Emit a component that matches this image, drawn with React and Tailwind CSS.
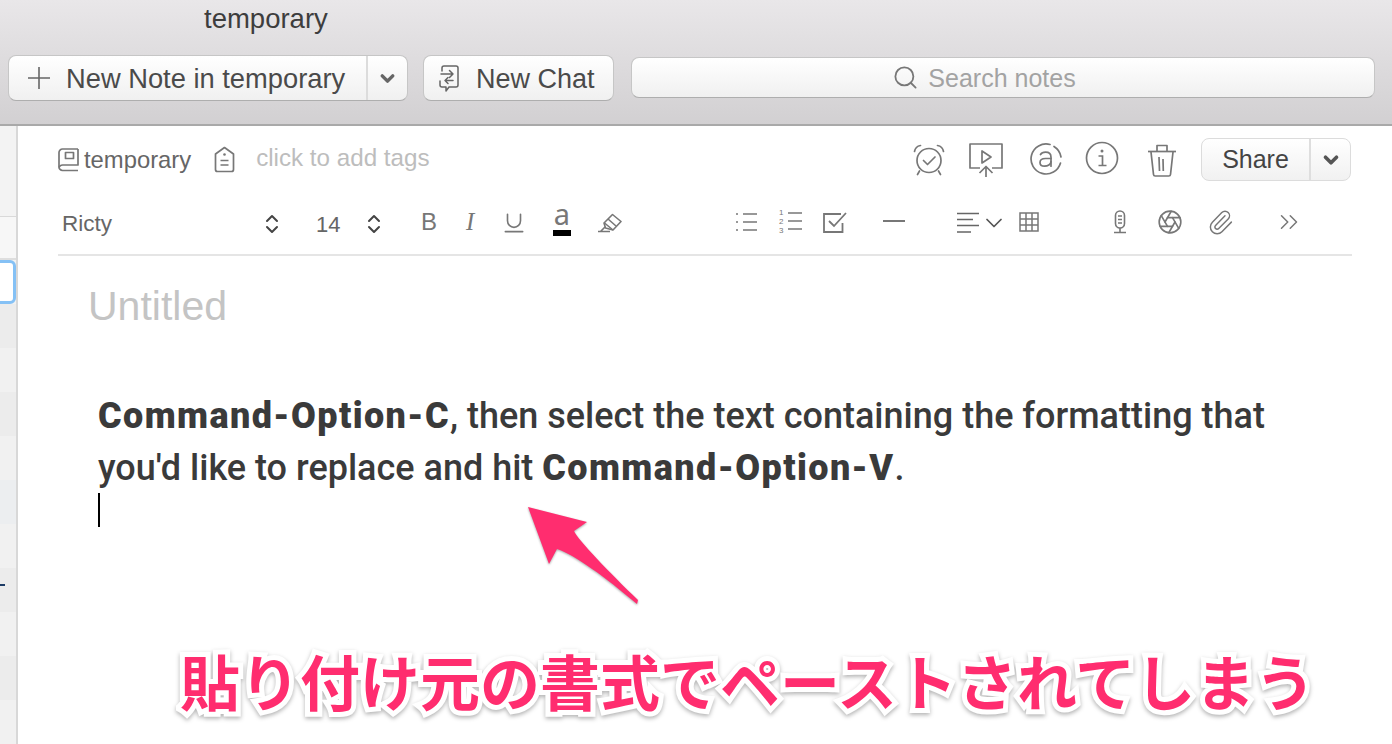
import { ChevronDown, ChevronsUpDown, Underline, Search, Aperture, Paperclip, ChevronsRight } from 'lucide-react';

const sidebarRows = ['bg-[#ececec]', 'bg-[#f1f1f1]', 'bg-[#ececec]', 'bg-[#f1f1f1]', 'bg-[#eceef0]', 'bg-[#f1f1f1]', 'bg-[#ececec]', 'bg-[#f1f1f1]', 'bg-[#ececec]', 'bg-[#f1f1f1]'];

function Sidebar() {
  return (
    <div className="w-[18px] shrink-0 border-r-2 border-[#d8d8d8] bg-[#f2f2f2] flex flex-col overflow-hidden">
      <div className="h-[91px] shrink-0 border-b border-[#d9d9d9] bg-[#f3f3f3]" />
      <div className="h-[43px] shrink-0 bg-[#f7f7f7] border-b-2 border-[#dedede]" />
      <div className="h-[44px] shrink-0 -ml-2 rounded-r-md border-[3px] border-[#85c1f5] bg-white" />
      {sidebarRows.map((tone, i) => (
        <div key={i} className={`relative h-[44px] shrink-0 ${tone}`}>
          {i === 6 && <div className="absolute left-0 top-[16px] w-[5px] h-[2px] bg-[#1d3c66]" />}
        </div>
      ))}
    </div>
  );
}

function AlarmIcon() {
  return (
    <svg width="34" height="36" viewBox="0 0 34 36" fill="none" stroke="#777" strokeWidth="1.7" strokeLinecap="round" strokeLinejoin="round">
      <circle cx="17" cy="18.5" r="12" />
      <path d="M11.500 18.500l4 4 7.500-7.500" />
      <path d="M2.500 9.500c.5-3 3-5.500 6-6M31.500 9.500c-.5-3-3-5.500-6-6M7.500 29l-2 3.500M26.500 29l2 3.500" />
    </svg>
  );
}

function PresentIcon() {
  return (
    <svg width="36" height="36" viewBox="0 0 36 36" fill="none" stroke="#777" strokeWidth="1.7" strokeLinejoin="round">
      <path d="M12 26H2V2h32v24H24" />
      <path d="M14 9v12l9-6z" />
      <path d="M18 35V25M11.500 31l6.500-6.500 6.500 6.500" />
    </svg>
  );
}

function AtIcon() {
  return (
    <svg width="34" height="34" viewBox="0 0 34 34" fill="none" stroke="#777" strokeWidth="1.7" strokeLinecap="round">
      <path d="M21 2.500A15 15 0 1 0 31.500 21" />
      <path d="M25 4.500A15 15 0 0 1 32 15" />
      <path d="M11.500 12.500c1-1.600 2.800-2.300 5-2.300 3.500 0 5.500 1.800 5.500 5v9" />
      <path d="M22 16.500h-5.500c-3.500 0-5.500 1.700-5.500 4s1.800 3.700 4.500 3.700c3 0 6.500-1.700 6.500-4.700" />
    </svg>
  );
}

function InfoIcon() {
  return (
    <svg width="34" height="34" viewBox="0 0 34 34" fill="none" stroke="#777" strokeWidth="1.7">
      <circle cx="17" cy="17" r="15.500" />
      <circle cx="17" cy="10" r="1.500" fill="#777" stroke="none" />
      <path d="M13.500 15H17.500V24M13.500 24.500h8" />
    </svg>
  );
}

function TrashIcon() {
  return (
    <svg width="30" height="34" viewBox="0 0 30 34" fill="none" stroke="#777" strokeWidth="1.7" strokeLinejoin="round">
      <path d="M1 8.500h28" />
      <path d="M10 8V2.500h10V8" />
      <path d="M4 9l2.500 22.500c.1 1 .8 1.500 1.700 1.500h13.600c.9 0 1.600-.5 1.700-1.500L26 9" />
      <path d="M12 14l.5 14M16 16l.3 12" />
    </svg>
  );
}

function BookIcon() {
  return (
    <svg width="21" height="24" viewBox="0 0 21 24" fill="none" stroke="#777" strokeWidth="1.7" strokeLinejoin="round">
      <path d="M20 1H4.500A3.500 3.500 0 0 0 1 4.500V19a3.500 3.500 0 0 0 3.500 3.500H20" />
      <path d="M20 1v16H5a4 4 0 0 0-4 2.500" />
      <path d="M7.500 4.500h8v6h-8z" />
    </svg>
  );
}

function TagIcon() {
  return (
    <svg width="21" height="27" viewBox="0 0 21 27" fill="none" stroke="#777" strokeWidth="1.700" strokeLinejoin="round">
      <path d="M10.500 1.500L1.500 8v15.500a2 2 0 0 0 2 2h14a2 2 0 0 0 2-2V8z" />
      <circle cx="10.500" cy="8.500" r="1.300" fill="#777" stroke="none" />
      <path d="M6.500 14.500h8M6.500 19h8" />
    </svg>
  );
}

function HighlightIcon() {
  return (
    <svg width="25" height="20" viewBox="0 0 25 20" fill="none" stroke="#777" strokeWidth="1.600" strokeLinejoin="round">
      <path d="M15.500 1.500l8.500 7-8 8.500-7.500-2-1.500-5z" />
      <path d="M7.500 10l8.500 7M11 6l8 7" />
      <path d="M1 18.500h12M8 14l-4.500 4.500" />
    </svg>
  );
}

function BulletListIcon() {
  return (
    <svg width="21" height="20" viewBox="0 0 21 20" fill="none" stroke="#777" strokeWidth="1.700">
      <path d="M7 2h14M7 10h14M7 18h14" />
      <path d="M0 2h2M0 10h2M0 18h2" />
    </svg>
  );
}

function NumberListIcon() {
  return (
    <div className="relative w-[23px] h-[22px]">
      <span className="absolute left-0 -top-[3px] text-[8px] leading-[9px] text-[#777] font-['Liberation_Sans',sans-serif] w-[5px]">1<br />2<br />3</span>
      <svg width="23" height="22" viewBox="0 0 23 22" fill="none" stroke="#777" strokeWidth="1.700">
        <path d="M9 2h14M9 10h14M9 18h14" />
      </svg>
    </div>
  );
}

function CheckBoxIcon() {
  return (
    <svg width="24" height="21" viewBox="0 0 24 21" fill="none" stroke="#777" strokeWidth="1.800">
      <path d="M19.500 11v9H1V2h17" />
      <path d="M6 9l5 5L23 1" />
    </svg>
  );
}

function AlignIcon() {
  return (
    <svg width="22" height="22" viewBox="0 0 22 22" fill="none" stroke="#666" strokeWidth="1.700">
      <path d="M0 1.500h22M0 7.500h16M0 13.500h22M0 20h14" />
    </svg>
  );
}

function GridIcon() {
  return (
    <svg width="20" height="20" viewBox="0 0 20 20" fill="none" stroke="#777" strokeWidth="1.500">
      <path d="M1 1h18v18H1zM7 1v18M13 1v18M1 7h18M1 13h18" />
    </svg>
  );
}

function MicIcon() {
  return (
    <svg width="14" height="24" viewBox="0 0 14 24" fill="none" stroke="#777" strokeWidth="1.600">
      <rect x="2.500" y="1" width="9" height="17" rx="4.500" />
      <path d="M5 6h4M5 9.500h4M5 13h4" />
      <path d="M7 18v4M1 22.500h12" />
    </svg>
  );
}

function PlusIcon() {
  return (
    <svg width="22" height="22" viewBox="0 0 22 22" fill="none" stroke="#666" strokeWidth="1.600">
      <path d="M11 0v22M0 11h22" />
    </svg>
  );
}

function ChatIcon() {
  return (
    <svg width="20" height="27" viewBox="0 0 20 27" fill="none" stroke="#666" strokeWidth="1.500" strokeLinejoin="round" strokeLinecap="round">
      <path d="M3 6V3a2 2 0 0 1 2-2h12a2 2 0 0 1 2 2v17a2 2 0 0 1-2 2h-7l-3 4v-4H3a2 2 0 0 1-2-2v-4" />
      <path d="M2 9h12M10.500 5.500L14 9l-3.500 3.500" />
      <path d="M14 15.500H6M9 12.500l-3 3 3 3" />
    </svg>
  );
}

function Annotation() {
  return (
    <>
      <svg className="absolute left-[520px] top-[500px] drop-shadow-[0_1px_1px_rgba(0,0,0,0.35)]" width="124" height="110" viewBox="520 500 124 110">
        <path d="M528 507L587 522L574 531C578 540 610 573 638 600L637 604C605 577 575 555 557 549L549 564Z" fill="#ff2d6f" />
      </svg>
      <div className="absolute left-[180px] top-[640px] whitespace-nowrap text-[60px] leading-[80px] font-bold text-[#ff2d6f] font-['Noto_Sans_CJK_JP',sans-serif] [-webkit-text-stroke:10px_white] [paint-order:stroke_fill] drop-shadow-[0_2px_2px_rgba(0,0,0,0.3)]">
        貼り付け元の書式でペーストされてしまう
      </div>
    </>
  );
}

export default function App() {
  return (
    <div className="relative w-[1392px] h-[744px] overflow-hidden bg-white font-['Liberation_Sans',sans-serif]">
      <header className="h-[126px] border-b-2 border-[#a9a9a9] bg-gradient-to-b from-[#e9e7e9] to-[#d2d0d2]">
        <div className="h-[55px] pl-[204px] pt-[3px] text-[27.500px] leading-[32px] text-[#3d3d3d]">temporary</div>
        <div className="flex items-start pl-2 pr-[17px]">
          <div className="flex w-[400px] h-[46px] rounded-lg bg-gradient-to-b from-white to-[#f0f0f0] border border-[#c6c6c6] border-b-[#aeaeae]">
            <div className="flex items-center flex-1 border-r-2 border-[#dcdcdc] pl-[19px] text-[#4a4a4a]">
              <PlusIcon />
              <span className="ml-[16px] mt-[2px] text-[27.300px] whitespace-nowrap">New Note in temporary</span>
            </div>
            <div className="w-[39px] flex items-center justify-center">
              <ChevronDown size={21} strokeWidth={4} className="text-[#666]" />
            </div>
          </div>
          <div className="flex items-center ml-[15px] w-[191px] h-[46px] rounded-lg bg-gradient-to-b from-white to-[#f0f0f0] border border-[#c6c6c6] border-b-[#aeaeae] pl-[15px] text-[#4a4a4a]">
            <ChatIcon />
            <span className="ml-[17px] mt-[2px] text-[27px] whitespace-nowrap">New Chat</span>
          </div>
          <div className="flex items-center justify-center ml-[17px] mt-[2px] flex-1 h-[41px] rounded-lg bg-gradient-to-b from-white to-[#f0f0f0] border border-[#c6c6c6] border-b-[#aeaeae] text-[#a3a3a3]">
            <div className="flex items-center mr-[38px]">
              <Search size={27} strokeWidth={1.6} className="text-[#777]" />
              <span className="ml-[9px] mt-[2px] text-[25px] whitespace-nowrap">Search notes</span>
            </div>
          </div>
        </div>
      </header>

      <div className="flex h-[618px]">
        <Sidebar />
        <main className="flex-1 pl-10 pr-10">
          <div className="flex items-center h-[66px] pt-[1px]">
            <BookIcon />
            <span className="ml-[5px] text-[23.800px] text-[#666] whitespace-nowrap">temporary</span>
            <span className="ml-[23px]"><TagIcon /></span>
            <span className="ml-[21px] -mt-[3px] text-[24.200px] text-[#bdbdbd] whitespace-nowrap">click to add tags</span>
            <div className="ml-auto flex items-center mr-[1px]">
              <AlarmIcon />
              <span className="ml-[22px]"><PresentIcon /></span>
              <span className="ml-[25px] -mt-[1px]"><AtIcon /></span>
              <span className="ml-[22px] -mt-[3px]"><InfoIcon /></span>
              <span className="ml-[28px]"><TrashIcon /></span>
              <div className="flex ml-[24px] w-[150px] h-[43px] rounded-lg bg-gradient-to-b from-white to-[#f1f1f1] border border-[#dcdcdc]">
                <div className="flex-1 flex items-center justify-center border-r-2 border-[#dedede] text-[25px] text-[#444]">Share</div>
                <div className="w-[39px] flex items-center justify-center">
                  <ChevronDown size={22} strokeWidth={4} className="text-[#555]" />
                </div>
              </div>
            </div>
          </div>

          <div className="flex items-center h-[64px] border-b-2 border-[#e5e5e5] text-[#777]">
            <span className="ml-1 w-[198px] mt-[2px] text-[22.500px] text-[#666]">Ricty</span>
            <ChevronsUpDown size={24} strokeWidth={2} className="text-[#444] mt-[2px]" />
            <span className="ml-[32px] w-[30px] mt-[2px] text-[22px] text-[#666]">14</span>
            <ChevronsUpDown size={24} strokeWidth={2} className="ml-[16px] text-[#444] mt-[2px]" />
            <span className="ml-[35px] w-[16px] -mt-[3px] text-[24px] font-medium">B</span>
            <span className="ml-[29px] w-[10px] -mt-[3px] text-[25px] italic font-['Liberation_Serif',serif]">I</span>
            <Underline size={26} strokeWidth={1.5} className="ml-[25px] -mt-[1px]" />
            <div className="ml-[26px] w-[18px] flex flex-col items-center">
              <span className="text-[29px] leading-[24px] -mt-[8px] font-['Noto_Sans',sans-serif]">a</span>
              <div className="w-[18px] h-[6px] bg-black mt-[4px]" />
            </div>
            <span className="ml-[26px] -mt-[1px]"><HighlightIcon /></span>
            <span className="ml-[114px] -mt-[2px]"><BulletListIcon /></span>
            <span className="ml-[22px] -mt-[2px]"><NumberListIcon /></span>
            <span className="ml-[21px] -mt-[2px]"><CheckBoxIcon /></span>
            <div className="ml-[36px] -mt-[4px] w-[22px] h-[2px] bg-[#777]" />
            <span className="ml-[52px]"><AlignIcon /></span>
            <ChevronDown size={28} strokeWidth={1.5} className="ml-[1px] text-[#555]" />
            <span className="ml-[11px] -mt-[2px]"><GridIcon /></span>
            <span className="ml-[74px] -mt-[2px]"><MicIcon /></span>
            <Aperture size={26} strokeWidth={1.5} className="ml-[30px] -mt-[2px]" />
            <Paperclip size={27} strokeWidth={1.3} className="ml-[24px] -mt-[2px]" />
            <ChevronsRight size={30} strokeWidth={1.2} className="ml-[40px] -mt-[2px]" />
          </div>

          <div className="pl-[30px] pt-[25px] text-[41px] leading-[50px] text-[#c4c4c4]">Untitled</div>
          <div className="pl-10 pt-[59px] text-[36px] leading-[52px] text-[#3a3a3a] font-['Roboto',sans-serif] font-medium w-[1260px]">
            <p className="whitespace-nowrap"><strong className="font-black tracking-[1.4px]">Command-Option-C</strong>, then select the text containing the formatting that</p>
            <p className="whitespace-nowrap">you'd like to replace and hit <strong className="font-black tracking-[1.4px]">Command-Option-V</strong>.</p>
            <div className="w-[2px] h-[34px] bg-black -mt-[1px]" />
          </div>
        </main>
      </div>

      <Annotation />
    </div>
  );
}
